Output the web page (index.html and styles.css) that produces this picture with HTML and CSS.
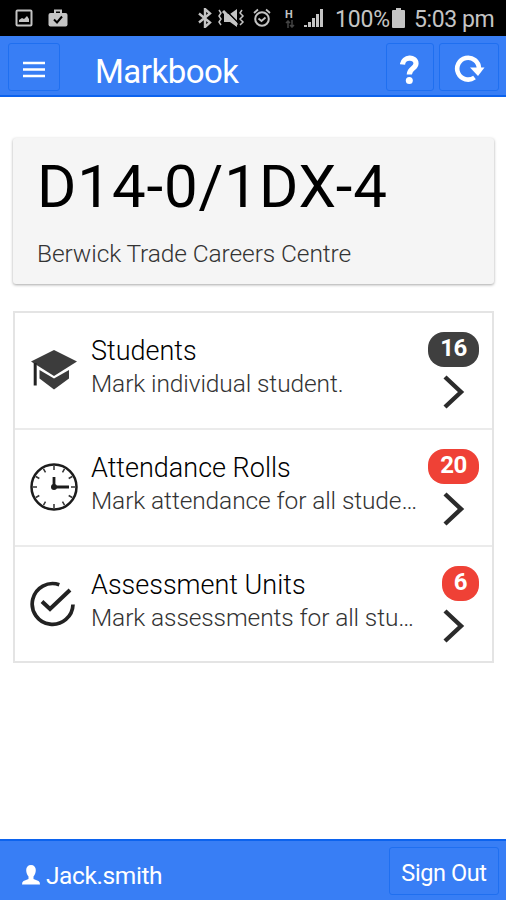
FILE: index.html
```
<!DOCTYPE html>
<html lang="en">
<head>
  <meta charset="UTF-8" />
  <meta name="viewport" content="width=device-width, initial-scale=1.0" />
  <title>Markbook</title>
  <link rel="stylesheet" href="styles.css">
</head>
<body>
  <div class="status-bar">
    <svg class="ico-image" width="18" height="18" viewBox="0 0 18 18"><rect x="1.500" y="1.500" width="15" height="15" rx="1" fill="none" stroke="currentColor" stroke-width="2"/><path d="M4 13V11l3-2 2 1 3-3 2 3v3z" fill="currentColor"/></svg>
    <svg class="ico-case" width="20" height="18" viewBox="0 0 20 18"><path d="M7 4V1.500h6V4" fill="none" stroke="currentColor" stroke-width="2"/><rect x="0.500" y="4" width="19" height="13.500" rx="2" fill="currentColor"/><path d="M6 10.500l3 3 5-6" fill="none" stroke="#000" stroke-width="2"/></svg>
    <svg class="ico-bt" width="14" height="20" viewBox="0 0 14 20"><path d="M1 5.500l11 9L7 19V1l5 4.500L1 14.500" fill="none" stroke="currentColor" stroke-width="2.400"/></svg>
    <svg class="ico-mute" width="28" height="20" viewBox="0 0 28 20"><path d="M7 6h6l7-5v18l-7-5H7z" fill="currentColor"/><path d="M8.500 2l14 14" stroke="#000" stroke-width="1.500"/><path d="M6 3l14 14" stroke="currentColor" stroke-width="3"/><path d="M2 2l2 3-2 3 2 3-2 3 2 3M25 2l-2 3 3 3-3 3 3 3-3 3" fill="none" stroke="currentColor" stroke-width="1.500"/></svg>
    <svg class="ico-alarm" width="18" height="20" viewBox="0 0 18 20"><circle cx="9" cy="11" r="6.800" fill="none" stroke="currentColor" stroke-width="2"/><path d="M1 5l4-3.500M17 5l-4-3.500M5.500 10.500l3 2.500 4-3.500" fill="none" stroke="currentColor" stroke-width="1.800"/></svg>
    <span class="network"><b>H</b><svg width="10" height="8" viewBox="0 0 10 8"><path d="M3 8V1M1 3l2-2 2 2M7 0v7M5 5l2 2 2-2" fill="none" stroke="#444" stroke-width="1.500"/></svg></span>
    <svg class="ico-signal" width="20" height="20" viewBox="0 0 20 20"><path d="M0 19v-2h3v2zM4 19v-5h3v5zM8 19v-9h3v9zM12 19V6h3v13zM16 19V1h3v18z" fill="currentColor"/></svg>
    <span class="percent">100%</span>
    <svg class="ico-battery" width="13" height="20" viewBox="0 0 13 20"><path d="M4 0h5v2h3q1 0 1 1v16q0 1-1 1H1q-1 0-1-1V3q0-1 1-1h3z" fill="currentColor"/></svg>
    <span class="time">5:03 pm</span>
  </div>

  <header class="header">
    <button class="btn btn-menu"><svg width="22" height="18" viewBox="0 0 22 18"><path d="M0 3h22M0 9.500h22M0 16h22" stroke="#fff" stroke-width="2.400"/></svg></button>
    <h1>Markbook</h1>
    <button class="btn btn-help"><svg width="20" height="30" viewBox="0 0 20 30"><path d="M2.500 9.500C3 1.500 16 1 16 8.500C16 13.500 9.300 13 9.300 19.500" fill="none" stroke="#fff" stroke-width="5.200"/><circle cx="9.300" cy="25.500" r="3.500" fill="#fff"/></svg></button>
    <button class="btn btn-refresh"><svg width="32" height="28" viewBox="0 0 32 28"><path d="M21.500 22.500A10.900 10.900 0 1 1 26 13.500" fill="none" stroke="#fff" stroke-width="4.600"/><path d="M17 12.500H31.500L25 21z" fill="#fff"/></svg></button>
  </header>

  <main class="content">
    <div class="card">
      <h2>D14-0/1DX-4</h2>
      <p>Berwick Trade Careers Centre</p>
    </div>

    <div class="list">
      <div class="item">
        <svg class="item-icon" width="48" height="48" viewBox="0 0 48 48"><path d="M1 15.500L24 4l23 11.500L24 30z" fill="#3c3c3c"/><path d="M5.200 17v22.500" stroke="#222" stroke-width="3"/><path d="M9.500 24L24 32.500 39 24v8.500L24 43.500 9.500 32.500z" fill="#3c3c3c"/></svg>
        <div class="text">
          <h3>Students</h3>
          <p>Mark individual student.</p>
        </div>
        <div class="side">
          <span class="badge badge-dark">16</span>
          <svg class="chevron" width="22" height="34" viewBox="0 0 22 34"><path d="M2 2l16 15L2 32" fill="none" stroke="#2b2b2b" stroke-width="4.400"/></svg>
        </div>
      </div>
      <div class="item">
        <svg class="item-icon" width="48" height="48" viewBox="0 0 48 48"><circle cx="24" cy="24" r="22.500" fill="none" stroke="#1c1c1c" stroke-width="2.500"/><path d="M24 3v4M24 41v4M3 24h4M41 24h4M13.500 5.800l2 3.500M34.500 5.800l-2 3.500M5.800 13.500l3.500 2M42.200 13.500l-3.500 2M5.800 34.500l3.500-2M42.200 34.500l-3.500-2M13.500 42.200l2-3.500M34.500 42.200l-2-3.500" stroke="#333" stroke-width="1.500"/><path d="M24 14v10h15" fill="none" stroke="#1c1c1c" stroke-width="2.800"/><circle cx="24" cy="24" r="3" fill="#1c1c1c"/></svg>
        <div class="text">
          <h3>Attendance Rolls</h3>
          <p>Mark attendance for all stude…</p>
        </div>
        <div class="side">
          <span class="badge badge-red">20</span>
          <svg class="chevron" width="22" height="34" viewBox="0 0 22 34"><path d="M2 2l16 15L2 32" fill="none" stroke="#2b2b2b" stroke-width="4.400"/></svg>
        </div>
      </div>
      <div class="item">
        <svg class="item-icon" width="48" height="48" viewBox="0 0 48 48"><path d="M29.300 4.700A20.400 20.400 0 1 0 43 24.500" fill="none" stroke="#222" stroke-width="3.700"/><path d="M12 21.500L20 29 40 10" fill="none" stroke="#222" stroke-width="4"/></svg>
        <div class="text">
          <h3>Assessment Units</h3>
          <p>Mark assessments for all stu…</p>
        </div>
        <div class="side">
          <span class="badge badge-red">6</span>
          <svg class="chevron" width="22" height="34" viewBox="0 0 22 34"><path d="M2 2l16 15L2 32" fill="none" stroke="#2b2b2b" stroke-width="4.400"/></svg>
        </div>
      </div>
    </div>
  </main>

  <footer class="footer">
    <svg width="18" height="20" viewBox="0 0 18 20"><path d="M9 0c3 0 4.800 2 4.800 5 0 3-1 5-2.300 6.500v2.500l5 2q1.500.8 1.500 3.500H0q0-2.700 1.500-3.500l5-2v-2.500C5.200 10 4.200 8 4.200 5 4.200 2 6 0 9 0z" fill="#fff"/></svg>
    <span class="user">Jack.smith</span>
    <button class="btn btn-signout">Sign Out</button>
  </footer>
</body>
</html>
```
FILE: styles.css
```
* {
  box-sizing: border-box;
}
body {
  margin: 0;
  height: 100vh;
  display: flex;
  flex-direction: column;
  font-family: Roboto, sans-serif;
  background: #fff;
  color: #222;
  overflow: hidden;
}
h1, h2, h3, p {
  margin: 0;
  font-weight: 400;
  white-space: nowrap;
}
svg {
  display: block;
  flex: none;
}

/* status bar */
.status-bar {
  height: 36px;
  flex: none;
  display: flex;
  align-items: center;
  padding-left: 15px;
  background: #000;
  color: #c4c4c4;
  font-size: 23px;
  white-space: nowrap;
}
.ico-case {
  margin-left: 15px;
}
.ico-bt {
  margin-left: 130px;
}
.ico-mute {
  margin-left: 5px;
}
.ico-alarm {
  margin-left: 8px;
}
.network {
  width: 10px;
  margin-left: 14px;
  font-size: 11px;
  line-height: 11px;
}
.network b {
  display: block;
}
.ico-signal {
  margin-left: 9px;
}
.percent {
  width: 53px;
  margin: 2px 0 0 11px;
  letter-spacing: -0.2px;
}
.ico-battery {
  margin-left: 4px;
}
.time {
  margin: 2px 0 0 9px;
  letter-spacing: -0.4px;
}

/* header */
.header {
  height: 61px;
  flex: none;
  display: flex;
  align-items: flex-start;
  padding: 7px 7px 0 8px;
  background: #387ef5;
  border-bottom: 2px solid #0c63ee;
}
.header h1 {
  flex: 1;
  margin-left: 35px;
  padding-top: 9px;
  font-size: 33px;
  line-height: 40px;
  letter-spacing: -0.5px;
  color: #fff;
}
.btn {
  display: flex;
  align-items: center;
  justify-content: center;
  height: 48px;
  padding: 0;
  background: #387ef5;
  border: 1px solid #1f6ff0;
  border-radius: 3px;
  color: #fff;
  font-family: inherit;
}
.btn-menu {
  width: 52px;
  padding-top: 4px;
}
.btn-help {
  width: 48px;
  padding-top: 5px;
}
.btn-refresh {
  width: 60px;
  margin-left: 5px;
  padding-top: 4px;
}

/* content */
.content {
  flex: 1;
  padding: 41px 12px 0 13px;
}
.card {
  height: 146px;
  padding: 14px 24px;
  background: #f5f5f5;
  border-radius: 3px;
  box-shadow: 0 1px 3px rgba(0, 0, 0, 0.35);
}
.card h2 {
  font-size: 60px;
  line-height: 70px;
  letter-spacing: 0.9px;
  color: #000;
}
.card p {
  margin-top: 17px;
  font-size: 24.5px;
  line-height: 30px;
  letter-spacing: -0.1px;
  font-weight: 300;
  color: #333;
}
.list {
  margin-top: 27px;
  border: 2px solid #e4e4e4;
}
.item {
  height: 117px;
  display: flex;
  padding: 0 13px 0 15px;
}
.item:first-child {
  height: 115px;
}
.item:last-child {
  height: 116px;
}
.item + .item {
  border-top: 2px solid #ebebeb;
}
.item-icon {
  margin-top: 33px;
}
.text {
  width: 328px;
  margin-left: 13px;
  padding-top: 21px;
}
.text h3 {
  font-size: 27px;
  line-height: 35px;
  font-weight: 300;
  color: #000;
}
.text p {
  font-size: 24.5px;
  line-height: 30px;
  letter-spacing: -0.1px;
  font-weight: 300;
  color: #333;
}
.side {
  flex: 1;
  display: flex;
  flex-direction: column;
  align-items: flex-end;
  padding-top: 19px;
}
.badge {
  height: 35px;
  padding: 0 12px;
  border-radius: 16px;
  color: #fff;
  font-size: 24px;
  font-weight: 700;
  line-height: 33px;
  letter-spacing: -0.4px;
}
.badge-dark {
  background: #3f3f3f;
}
.badge-red {
  background: #ef4136;
}
.chevron {
  margin: 8px 14px 0 0;
}

/* footer */
.footer {
  height: 61px;
  flex: none;
  display: flex;
  align-items: center;
  padding: 0 7px 0 22px;
  background: #387ef5;
  border-top: 2px solid #0c63ee;
  color: #fff;
}
.footer svg {
  margin-top: 9px;
}
.user {
  flex: 1;
  margin: 9px 0 0 6px;
  font-size: 24.5px;
  letter-spacing: -0.4px;
}
.btn-signout {
  width: 110px;
  padding-top: 5px;
  font-size: 23.5px;
  letter-spacing: -0.4px;
}
```
